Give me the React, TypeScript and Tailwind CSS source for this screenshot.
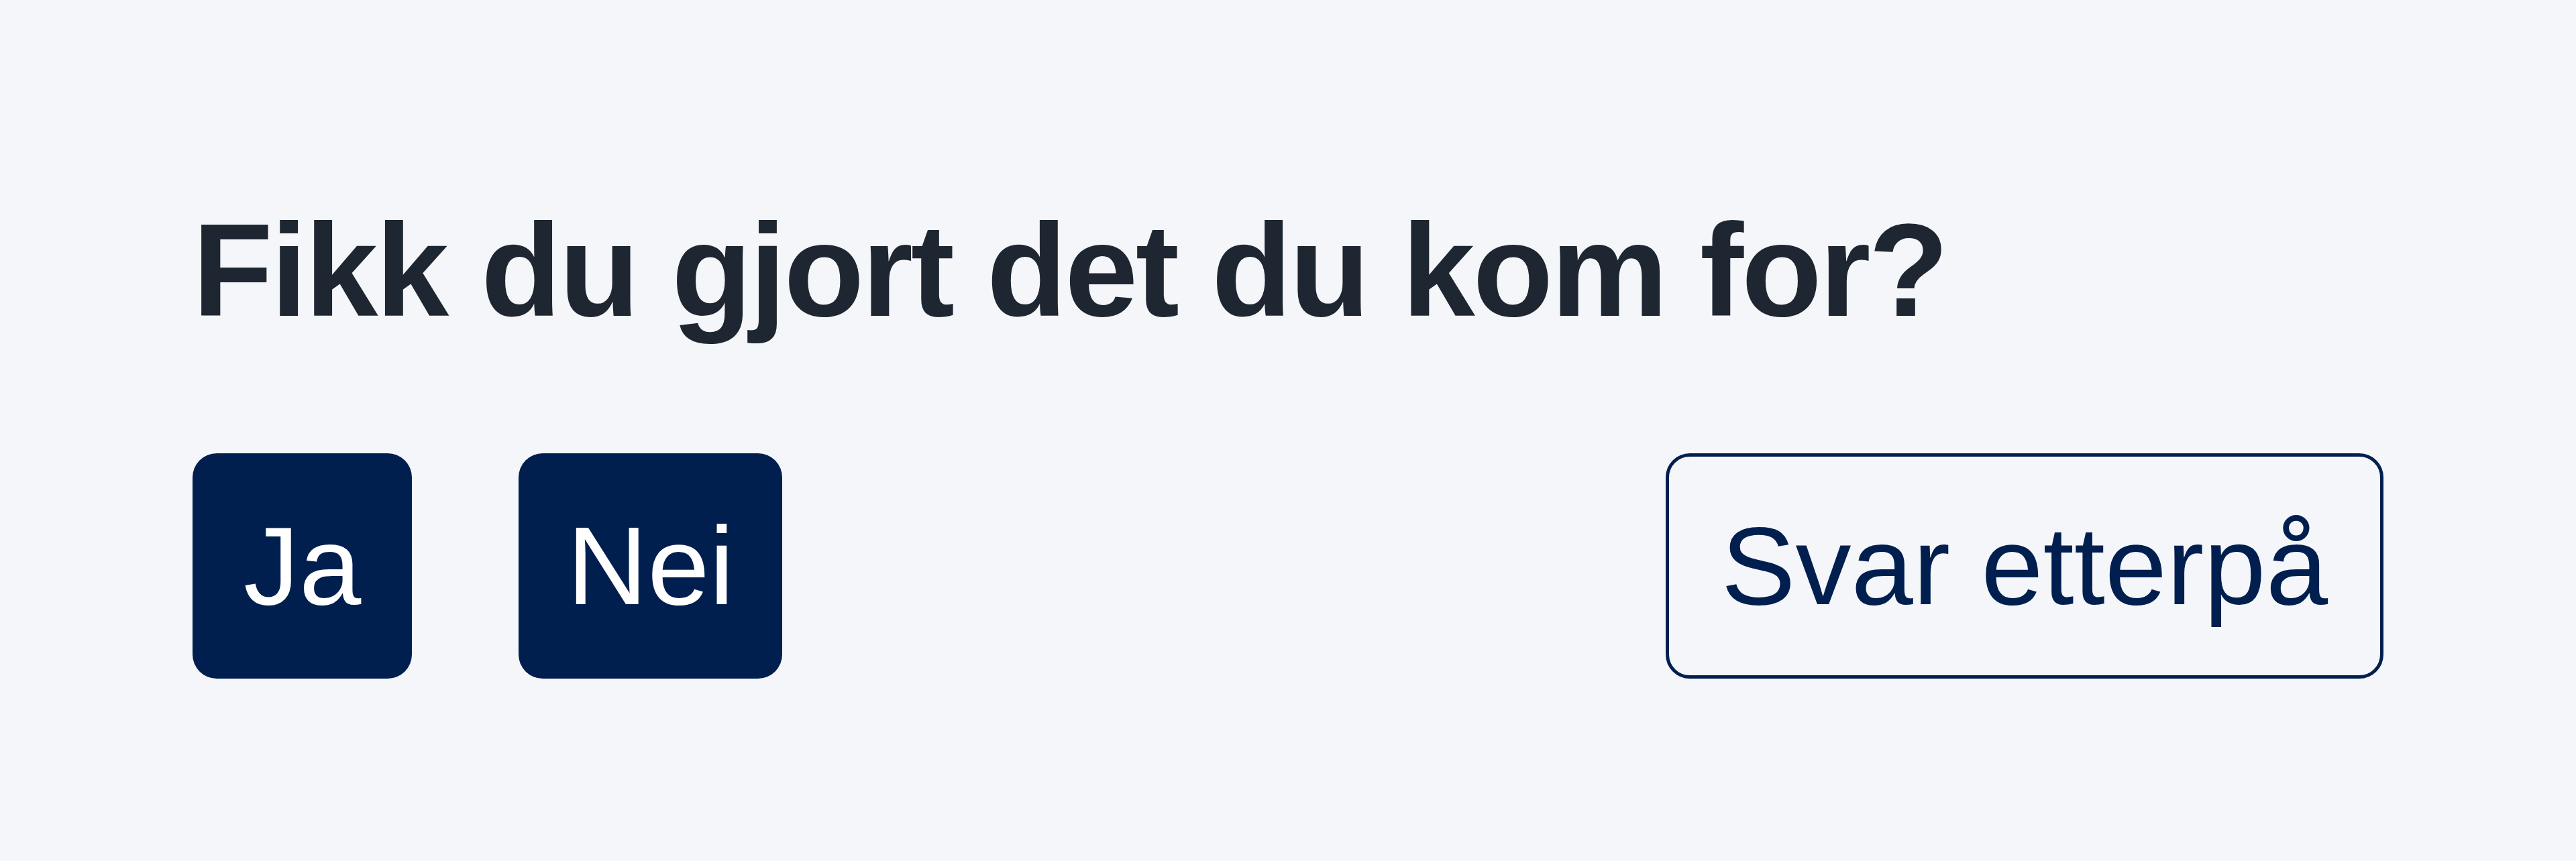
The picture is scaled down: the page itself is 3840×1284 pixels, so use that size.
import React from 'react';

const FeedbackPrompt = () => {
  const answer = (value: string) => {
    console.log('feedback', value);
  };

  return (
    <section className="w-full min-h-screen bg-[#f5f6fa] px-[287px] pt-[306px] font-['Liberation_Sans',Arial,sans-serif]">
      {/* Question */}
      <h2 className="text-[196px] leading-none font-bold tracking-[-0.017em] text-[#1e2731]">
        Fikk du gjort det du kom for?
      </h2>

      {/* Answers */}
      <div className="flex items-center justify-between mt-[174px]">
        <div className="flex items-center gap-[159px]">
          <button
            onClick={() => answer('ja')}
            className="h-[336px] px-[76px] rounded-[36px] bg-[#001f4f] text-white text-[166px] leading-none"
          >
            Ja
          </button>
          <button
            onClick={() => answer('nei')}
            className="h-[336px] px-[72px] rounded-[36px] bg-[#001f4f] text-white text-[166px] leading-none"
          >
            Nei
          </button>
        </div>
        <button
          onClick={() => answer('senere')}
          className="h-[336px] px-[78px] rounded-[36px] border-[5px] border-[#001f4f] text-[#001f4f] text-[166px] leading-none"
        >
          Svar etterpå
        </button>
      </div>
    </section>
  );
};

export default FeedbackPrompt;
